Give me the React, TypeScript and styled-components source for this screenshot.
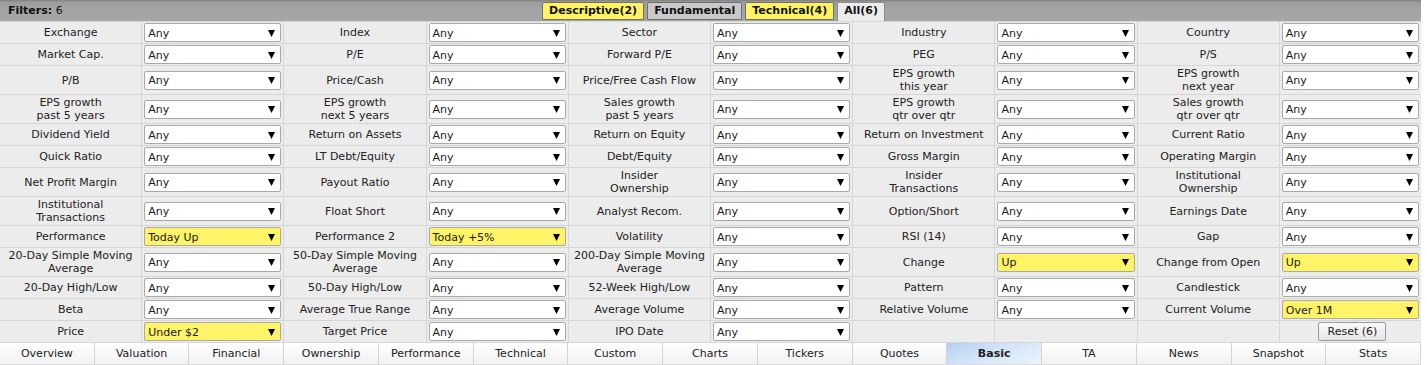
import styled, { createGlobalStyle } from "styled-components";

const GlobalStyle = createGlobalStyle`
  body {
    margin: 0;
    background: #fff;
    font-family: Verdana, "DejaVu Sans", sans-serif;
    font-size: 11px;
    color: #222;
  }
`;

const Screener = styled.div`
  width: 1421px;
`;

const FilterBar = styled.div`
  display: grid;
  grid-template-columns: 1fr auto 1fr;
  align-items: end;
  height: 21px;
  background: linear-gradient(#7e7e7e 0, #9b9b9b 2px, #a4a4a4 8px, #a6a6a6);
`;

const FilterCount = styled.div`
  align-self: center;
  padding-left: 8px;
  color: #111;
  font-weight: normal;
  b {
    font-weight: bold;
  }
`;

const Tabs = styled.div`
  display: flex;
  gap: 3px;
  align-items: flex-end;
  margin-left: 6px;
`;

const Tab = styled.div<{ $kind: "on" | "off" | "current" }>`
  height: ${(p) => (p.$kind === "current" ? "18px" : "16px")};
  margin-bottom: ${(p) => (p.$kind === "current" ? "0" : "1px")};
  line-height: 16px;
  padding: 0 6px;
  font-weight: bold;
  color: #111;
  border: 1px solid ${(p) => (p.$kind === "current" ? "#8c8c8c" : "#6f6f6f")};
  border-bottom: ${(p) => (p.$kind === "current" ? "none" : undefined)};
  border-radius: 2px 2px 0 0;
  background: ${(p) =>
    p.$kind === "on" ? "#fff45f" : p.$kind === "off" ? "#c9c9c9" : "#ececec"};
`;

const Grid = styled.div`
  display: grid;
  grid-template-columns: repeat(10, 1fr);
  gap: 1px;
  padding-top: 1px;
  background: #d6d6d6;
`;

const Label = styled.div`
  display: flex;
  align-items: center;
  justify-content: center;
  text-align: center;
  white-space: pre-line;
  line-height: 13px;
  padding: 1px 2px;
  min-height: 19px;
  background: #ececec;
  color: #222;
`;

const Field = styled.div`
  display: flex;
  align-items: center;
  justify-content: center;
  padding: 1px 2px;
  background: #ececec;
`;

const Select = styled.div<{ $active?: boolean }>`
  box-sizing: border-box;
  display: flex;
  align-items: center;
  justify-content: space-between;
  width: 100%;
  height: 19px;
  padding: 1px 5px 0 3px;
  border: 1px solid #a9a9a9;
  border-radius: 2px;
  background: ${(p) => (p.$active ? "#fff367" : "#fff")};
  color: #1a1a1a;
`;

const ResetButton = styled.div`
  box-sizing: border-box;
  height: 19px;
  line-height: 17px;
  padding: 0 8px;
  margin-left: 4px;
  border: 1px solid #9a9a9a;
  border-radius: 2px;
  background: linear-gradient(#fbfbfb, #e4e4e4);
  color: #222;
`;

const Nav = styled.div`
  display: grid;
  grid-template-columns: repeat(15, 1fr);
  border-top: 1px solid #d6d6d6;
`;

const NavItem = styled.div<{ $current?: boolean }>`
  height: 21px;
  line-height: 21px;
  text-align: center;
  border-right: 1px solid #d4d4d4;
  border-bottom: 1px solid #dcdcdc;
  font-weight: ${(p) => (p.$current ? "bold" : "normal")};
  background: ${(p) =>
    p.$current
      ? "linear-gradient(160deg, #b3cff1 0%, #d3e4f8 45%, #ebf3fd 100%)"
      : "linear-gradient(#ffffff, #f1f1f1)"};
  color: #222;
`;

const Arrow = () => (
  <svg width="7" height="7" viewBox="0 0 7 7">
    <polygon points="0,0 7,0 3.5,7" fill="#000" />
  </svg>
);

type Cell = [string, string?, boolean?];

const rows: Cell[][] = [
  [["Exchange"], ["Index"], ["Sector"], ["Industry"], ["Country"]],
  [["Market Cap."], ["P/E"], ["Forward P/E"], ["PEG"], ["P/S"]],
  [["P/B"], ["Price/Cash"], ["Price/Free Cash Flow"], ["EPS growth\nthis year"], ["EPS growth\nnext year"]],
  [
    ["EPS growth\npast 5 years"],
    ["EPS growth\nnext 5 years"],
    ["Sales growth\npast 5 years"],
    ["EPS growth\nqtr over qtr"],
    ["Sales growth\nqtr over qtr"],
  ],
  [["Dividend Yield"], ["Return on Assets"], ["Return on Equity"], ["Return on Investment"], ["Current Ratio"]],
  [["Quick Ratio"], ["LT Debt/Equity"], ["Debt/Equity"], ["Gross Margin"], ["Operating Margin"]],
  [["Net Profit Margin"], ["Payout Ratio"], ["Insider\nOwnership"], ["Insider\nTransactions"], ["Institutional\nOwnership"]],
  [["Institutional\nTransactions"], ["Float Short"], ["Analyst Recom."], ["Option/Short"], ["Earnings Date"]],
  [["Performance", "Today Up", true], ["Performance 2", "Today +5%", true], ["Volatility"], ["RSI (14)"], ["Gap"]],
  [
    ["20-Day Simple Moving\nAverage"],
    ["50-Day Simple Moving\nAverage"],
    ["200-Day Simple Moving\nAverage"],
    ["Change", "Up", true],
    ["Change from Open", "Up", true],
  ],
  [["20-Day High/Low"], ["50-Day High/Low"], ["52-Week High/Low"], ["Pattern"], ["Candlestick"]],
  [["Beta"], ["Average True Range"], ["Average Volume"], ["Relative Volume"], ["Current Volume", "Over 1M", true]],
];

const navItems = [
  "Overview",
  "Valuation",
  "Financial",
  "Ownership",
  "Performance",
  "Technical",
  "Custom",
  "Charts",
  "Tickers",
  "Quotes",
  "Basic",
  "TA",
  "News",
  "Snapshot",
  "Stats",
];

function FilterSelect({ value = "Any", active }: { value?: string; active?: boolean }) {
  return (
    <Field>
      <Select $active={active}>
        <span>{value}</span>
        <Arrow />
      </Select>
    </Field>
  );
}

export default function App() {
  return (
    <Screener>
      <GlobalStyle />
      <FilterBar>
        <FilterCount>
          <b>Filters:</b> 6
        </FilterCount>
        <Tabs>
          <Tab $kind="on">Descriptive(2)</Tab>
          <Tab $kind="off">Fundamental</Tab>
          <Tab $kind="on">Technical(4)</Tab>
          <Tab $kind="current">All(6)</Tab>
        </Tabs>
        <div />
      </FilterBar>

      <Grid>
        {rows.map((row) =>
          row.map(([label, value, active]) => [
            <Label key={label}>{label}</Label>,
            <FilterSelect key={label + "-sel"} value={value} active={active} />,
          ])
        )}
        <Label>Price</Label>
        <FilterSelect value="Under $2" active />
        <Label>Target Price</Label>
        <FilterSelect />
        <Label>IPO Date</Label>
        <FilterSelect />
        <Label />
        <Label />
        <Label />
        <Field>
          <ResetButton>Reset (6)</ResetButton>
        </Field>
      </Grid>

      <Nav>
        {navItems.map((item) => (
          <NavItem key={item} $current={item === "Basic"}>
            {item}
          </NavItem>
        ))}
      </Nav>
    </Screener>
  );
}
